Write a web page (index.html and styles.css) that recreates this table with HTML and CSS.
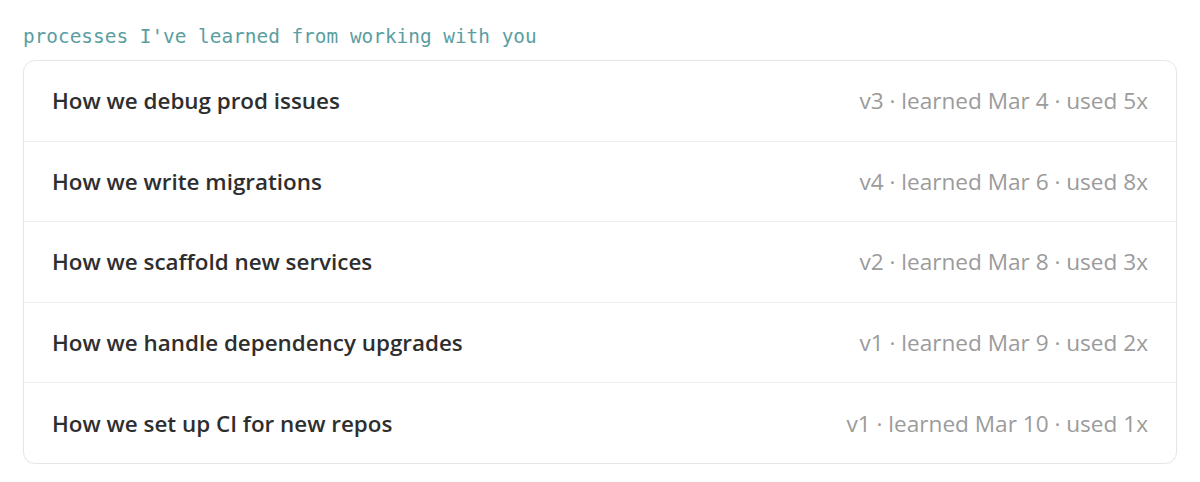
FILE: index.html
```html
<!DOCTYPE html>
<html lang="en">
<head>
    <meta charset="UTF-8">
    <meta name="viewport" content="width=device-width, initial-scale=1.0">
    <title>Processes</title>
    <link rel="stylesheet" href="styles.css">
</head>
<body>

    <div class="container">
        <p class="caption">processes I've learned from working with you</p>

        <!-- Lista de processos -->
        <div class="card">
            <div class="row">
                <span class="title">How we debug prod issues</span>
                <span class="meta">v3 · learned Mar 4 · used 5x</span>
            </div>
            <div class="row">
                <span class="title">How we write migrations</span>
                <span class="meta">v4 · learned Mar 6 · used 8x</span>
            </div>
            <div class="row">
                <span class="title">How we scaffold new services</span>
                <span class="meta">v2 · learned Mar 8 · used 3x</span>
            </div>
            <div class="row">
                <span class="title">How we handle dependency upgrades</span>
                <span class="meta">v1 · learned Mar 9 · used 2x</span>
            </div>
            <div class="row">
                <span class="title">How we set up CI for new repos</span>
                <span class="meta">v1 · learned Mar 10 · used 1x</span>
            </div>
        </div>
    </div>

</body>
</html>
```

FILE: styles.css
```css
body {
    font-family: "Open Sans", "Noto Sans", sans-serif;
    margin: 0;
    padding: 0;
    background-color: #fff;
}

.container {
    padding: 25px 23px 0 23px;
    width: 1154px;
}

.caption {
    font-family: "DejaVu Sans Mono", monospace;
    font-size: 19.4px;
    line-height: 24px;
    color: #5b9ea1;
    margin: 0 0 11px 0;
}

.card {
    border: 1px solid #e6e6e6;
    border-radius: 12px;
    background-color: #fff;
    box-shadow: 0 1px 2px rgba(0, 0, 0, 0.03);
}

.row {
    display: flex;
    justify-content: space-between;
    align-items: center;
    height: 79.6px;
    padding: 0 28px;
    border-bottom: 1px solid #eeeeee;
}

.row:last-child {
    border-bottom: none;
}

.title {
    font-size: 22.4px;
    font-weight: 600;
    color: #2e2e2e;
}

.meta {
    font-size: 22.6px;
    color: #9b9b9b;
}
```
